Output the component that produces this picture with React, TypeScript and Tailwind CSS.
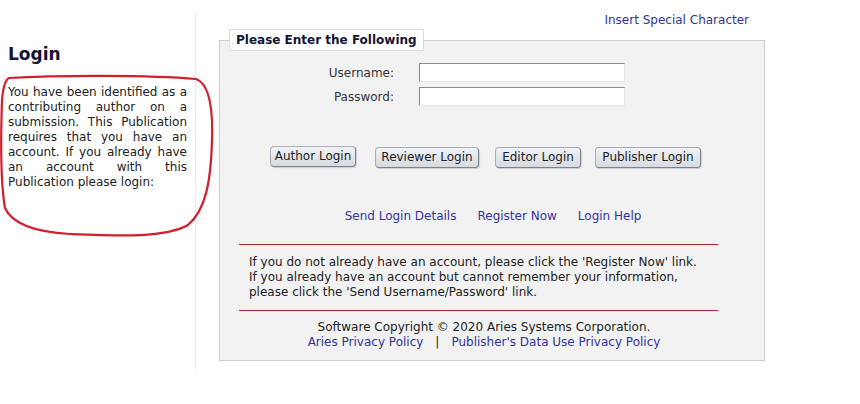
const font = { fontFamily: '"DejaVu Sans", Verdana, sans-serif' };

const LoginButton = ({ label, width }: { label: string; width: string }) => (
  <button
    type="button"
    className={`h-[21px] rounded-[4px] border border-[#a9afb8] border-b-[#7d838c] border-r-[#7d838c] bg-gradient-to-b from-[#f0f2f5] to-[#d6dbe2] text-[12px] leading-none text-[#222] shadow-[1px_1px_1px_rgba(0,0,0,0.15)] ${width}`}
  >
    {label}
  </button>
);

const FieldRow = ({ label, type }: { label: string; type: string }) => (
  <div className="flex items-center">
    <label className="w-[174px] text-right text-[12px] text-[#333]">{label}</label>
    <input
      type={type}
      className="ml-[25px] h-[19px] w-[206px] border border-[#e6e6e6] border-l-[#8a8a8a] border-t-[#8a8a8a] bg-white outline-none"
    />
  </div>
);

const LoginNotice = () => (
  <div className="relative mt-[12px] h-[358px] w-[196px] shrink-0 border-r border-[#ececec] pl-[8px] pr-[8px] pt-[31px]">
    <h1 className="text-[17px] font-bold leading-[22px] text-[#141433]">Login</h1>
    <p className="mt-[20px] text-justify text-[12px] leading-[15px] text-[#222]">
      You have been identified as a contributing author on a submission. This Publication requires
      that you have an account. If you already have an account with this Publication please login:
    </p>
    {/* hand-drawn annotation */}
    <svg
      className="pointer-events-none absolute left-0 top-[-12px]"
      width="220"
      height="245"
      viewBox="0 0 220 245"
    >
      <path
        d="M9 78 C 60 75, 150 75, 196 79 C 210 84, 213 110, 212 140 C 211 180, 206 210, 188 225 C 165 238, 120 236, 70 234 C 35 232, 12 224, 5 208 C 0 180, 1 130, 2 100 C 3 88, 5 80, 9 78 Z"
        fill="none"
        stroke="#d0202c"
        strokeWidth="2.2"
      />
    </svg>
  </div>
);

const LoginForm = () => (
  <fieldset className="ml-[23px] w-[546px] border border-[#cfcfcf] bg-[#f2f2f2] pb-[10px] shadow-[1px_1px_0_#fff]">
    <legend className="ml-[9px] border border-[#dcdcdc] bg-white px-[6px] py-[1px] text-[12px] font-bold text-[#141433]">
      Please Enter the Following
    </legend>
    <div className="mt-[12px] flex flex-col gap-[5px]">
      <FieldRow label="Username:" type="text" />
      <FieldRow label="Password:" type="password" />
    </div>
    <div className="mt-[38px] flex items-center pl-[50px]">
      <LoginButton label="Author Login" width="w-[86px]" />
      <div className="ml-[19px]">
        <LoginButton label="Reviewer Login" width="w-[104px]" />
      </div>
      <div className="ml-[16px]">
        <LoginButton label="Editor Login" width="w-[86px]" />
      </div>
      <div className="ml-[14px]">
        <LoginButton label="Publisher Login" width="w-[106px]" />
      </div>
    </div>
    <div className="mt-[39px] flex justify-center gap-[21px] pl-[2px] text-[12px] text-[#333399]">
      <a href="#">Send Login Details</a>
      <a href="#">Register Now</a>
      <a href="#">Login Help</a>
    </div>
    <div className="ml-[19px] mt-[19px] w-[479px] border-y border-[#b3242e] px-[10px] pb-[10px] pt-[10px] text-[12px] leading-[15px] text-[#222]">
      If you do not already have an account, please click the 'Register Now' link.
      <br />
      If you already have an account but cannot remember your information, please click the
      'Send Username/Password' link.
    </div>
    <div className="mt-[9px] pr-[16px] text-center text-[12px] leading-[15px] text-[#222]">
      <div>Software Copyright © 2020 Aries Systems Corporation.</div>
      <div>
        <a href="#" className="text-[#333399]">
          Aries Privacy Policy
        </a>
        <span className="mx-[12px]">|</span>
        <a href="#" className="text-[#333399]">
          Publisher's Data Use Privacy Policy
        </a>
      </div>
    </div>
  </fieldset>
);

export default function App() {
  return (
    <div className="h-[404px] w-[860px] bg-white" style={font}>
      <div className="flex">
        <LoginNotice />
        <div className="flex flex-col pt-[11px]">
          <div className="flex justify-end pr-[16px] text-[12px] text-[#333399]">
            <a href="#">Insert Special Character</a>
          </div>
          <div className="mt-0">
            <LoginForm />
          </div>
        </div>
      </div>
    </div>
  );
}
